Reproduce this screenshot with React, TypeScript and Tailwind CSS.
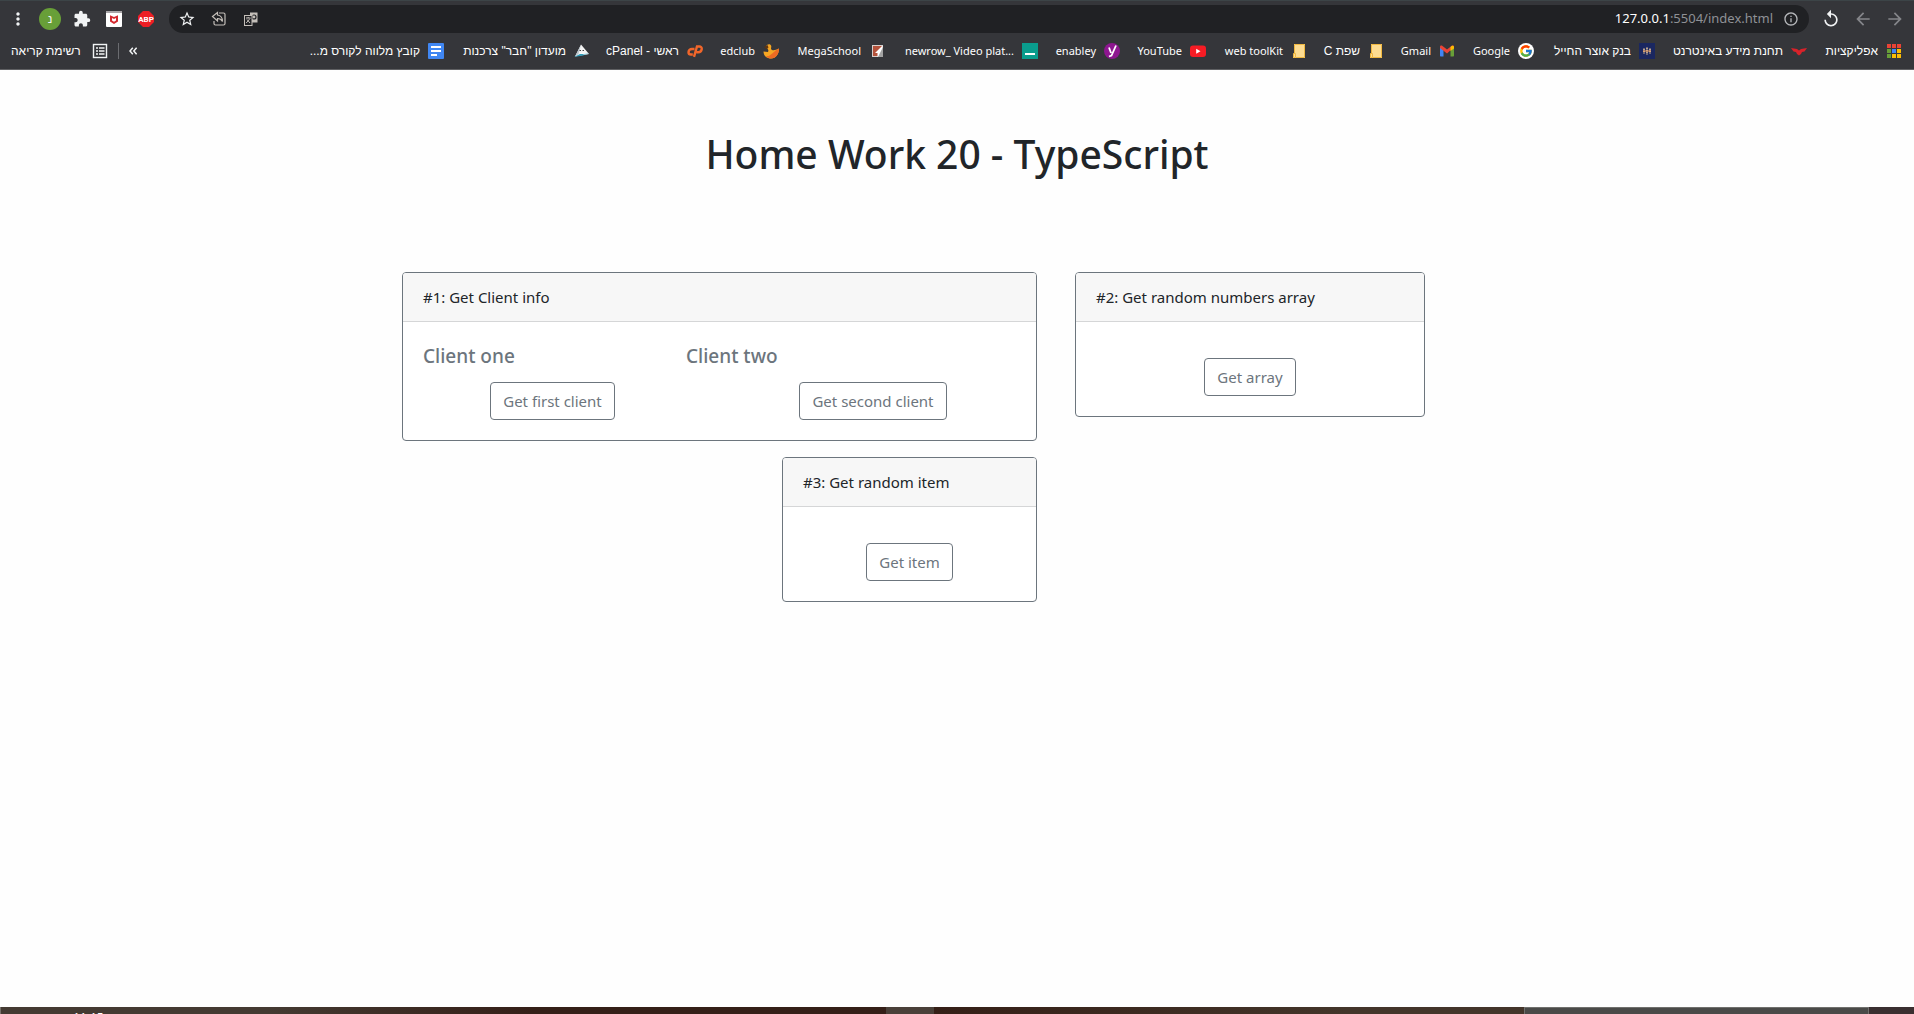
import type { ReactNode } from 'react';
import {
  MdArrowBack,
  MdArrowForward,
  MdExtension,
  MdInfoOutline,
  MdMoreVert,
  MdReplay,
  MdStarBorder,
} from 'react-icons/md';
import { FcGoogle } from 'react-icons/fc';

const AppsIcon = () => {
  const colors = ['#ea4335', '#ea4335', '#ea4335', '#689f38', '#4285f4', '#fbbc04', '#689f38', '#fbbc04', '#fbbc04'];
  return (
    <svg viewBox="0 0 16 16" className="size-4">
      {colors.map((c, i) => (
        <rect key={i} x={1 + (i % 3) * 5} y={1 + Math.floor(i / 3) * 5} width="4" height="4" fill={c} />
      ))}
    </svg>
  );
};

const WingsIcon = () => (
  <svg viewBox="0 0 16 16" className="size-4" fill="#d8222a">
    <path d="M0 5l6 1 2 1.500 2-1.500 6-1-2.500 3.500-2.500.5-1 2-2 1.500-2-1.500-1-2-2.500-.5z" />
  </svg>
);

const BankIcon = () => (
  <svg viewBox="0 0 16 16" className="size-4">
    <rect width="16" height="16" fill="#1a2760" />
    <path d="M5 5.500v5M8 4.500v7M11 5.500v5" stroke="#e3c39a" strokeWidth="1.600" strokeDasharray="1.700 .5" />
    <path d="M4 8h8" stroke="#f5a35c" />
  </svg>
);

const GoogleIcon = () => (
  <span className="flex size-4 items-center justify-center rounded-full bg-white">
    <FcGoogle className="size-3.5" />
  </span>
);

const GmailIcon = () => (
  <svg viewBox="0 0 16 16" className="size-4">
    <path d="M1 4v8.500c0 .6.400 1 1 1h2.500V7z" fill="#4285f4" />
    <path d="M15 4v8.500c0 .6-.4 1-1 1h-2.500V7z" fill="#689f38" />
    <path d="M1 4c0-1.500 1.500-1.800 2.500-1L8 6.500 12.500 3c1-.8 2.500-.5 2.500 1L8 10.500 1 5z" fill="#ea4335" />
    <path d="M11.500 4l1-1c1-.7 2.500-.4 2.500 1v1.500L11.500 8z" fill="#fbbc04" />
  </svg>
);

const FolderIcon = () => (
  <svg viewBox="0 0 16 16" className="size-4">
    <path d="M3 1h11v14H2v-4h1z" fill="#fddc91" />
    <path d="M3.500 11V1.500h10v13" fill="none" stroke="#f0b840" />
    <path d="M2.500 10.500h2v4h-2zM5 14.500h8.500" fill="#fddc91" stroke="#f0b840" />
  </svg>
);

const YouTubeIcon = () => (
  <svg viewBox="0 0 16 16" className="size-4">
    <rect y="2.500" width="16" height="11.500" rx="3" fill="#f61c24" />
    <path d="M6.200 5.700v5L10.500 8.200z" fill="#fff" />
  </svg>
);

const EnableyIcon = () => (
  <svg viewBox="0 0 16 16" className="size-4">
    <circle cx="8" cy="8" r="8" fill="#8e1690" />
    <path d="M5 4.500L7 10M12 2.500L7.500 12.500 5 13.500" fill="none" stroke="#fff" strokeWidth="1.800" />
  </svg>
);

const NewrowIcon = () => (
  <svg viewBox="0 0 16 16" className="size-4">
    <rect width="16" height="16" fill="#0a9c8d" />
    <rect x="3" y="10" width="10" height="2" fill="#fff" />
  </svg>
);

const MegaIcon = () => (
  <svg viewBox="0 0 16 16" className="size-4">
    <rect x="3.500" y="2.500" width="10" height="11" fill="#b5533c" stroke="#d8d0cc" />
    <path d="M13.500 2.500L6 10h2.500v4l5.500-3z" fill="#fff" />
    <path d="M9 14L14 4v10z" fill="#a3a3a3" />
  </svg>
);

const EdclubIcon = () => (
  <svg viewBox="0 0 16 16" className="size-4">
    <path d="M3 3.500C4 1 7 .5 8 2.500c1 1.500-1 3.500 1 4.500 2 .5 4 0 7-1.500 0 5.500-3 10-8 10C4 15.500.5 13 .5 8.500L5 9c1-1.500 0-3-2-5.500z" fill="#f5a623" />
    <path d="M16 5.500c0 5.500-3 10-8 10-2 0-4-1-5-2.500 5 1 7-5 13-7.500z" fill="#ee6b23" />
    <path d="M1 4l3.500-2 1 2.500L3.500 6z" fill="#5b3414" />
  </svg>
);

const CpanelIcon = () => (
  <svg viewBox="0 0 16 16" className="size-4" fill="none" stroke="#f1662a" strokeWidth="2.400">
    <path d="M7.500 6H5C3 6 1.500 7.500 1.500 9.200c0 1.500 1 2.300 2.500 2.300h1.800" />
    <path d="M7 13.800L10 3.500h2.200c1.800 0 2.800 1 2.500 2.800-.3 1.700-1.700 2.900-3.400 2.900H9.500" />
  </svg>
);

const HatIcon = () => (
  <svg viewBox="0 0 16 16" className="size-4">
    <path d="M7 1.500L15 11l-3 .5L1 13.500z" fill="#f3f3f3" />
    <path d="M1 13.500L7 2l-2.500 9z" fill="#b9c4cc" />
    <path d="M0 14l6-3 9-.5-6 2z" fill="#2e9bb8" />
    <path d="M4 9.500L15 11l-5 .5z" fill="#fff" />
    <path d="M5.500 7.500h1.500M8.500 7.500h1.500" stroke="#444" />
  </svg>
);

const DocsIcon = () => (
  <svg viewBox="0 0 16 16" className="size-4">
    <rect width="16" height="16" rx="1" fill="#4087f3" />
    <path d="M3 4h10M3 8h10M3 12h6" stroke="#fff" strokeWidth="2" />
  </svg>
);

const ListIcon = () => (
  <svg viewBox="0 0 16 16" className="size-4" fill="none" stroke="#f1f3f4">
    <rect x="1.500" y="1.500" width="13" height="13" strokeWidth="1.400" />
    <path d="M4 5h2M7 5h5.500M4 8h2M7 8h5.500M4 11h2M7 11h5.500" strokeWidth="1.500" />
  </svg>
);

const McAfeeIcon = () => (
  <svg viewBox="0 0 16 16" className="size-4">
    <rect width="16" height="16" rx="1" fill="#fff" />
    <rect width="16" height="2" fill="#a9a5a8" />
    <path d="M4 4.200l4 1.800 4-1.800v6.300L8 13l-4-2.500z" fill="#d42a30" />
    <path d="M6 7l2 1 2-1v2.500L8 10.700 6 9.500z" fill="#fff" />
  </svg>
);

const ShareIcon = () => (
  <svg viewBox="0 0 16 16" className="size-4" fill="none" stroke="#c4bfb9" strokeWidth="1.200">
    <path d="M8 2h4.500c1 0 1.500.5 1.500 1.500v9c0 1-.5 1.500-1.500 1.500h-8C3.500 14 3 13.500 3 12.500V10" />
    <path d="M1.500 5.500L6.500 1.500v2.500c3.500.5 5 3 5 6.500C10.500 8.500 9 7.500 6.500 7.500v2.500z" />
  </svg>
);

const TranslateIcon = () => (
  <svg viewBox="0 0 16 16" className="size-4">
    <path d="M7 1.500h7.500v10H9l-2-8z" fill="#c4bfb9" />
    <circle cx="11" cy="6" r="2" fill="none" stroke="#202124" strokeWidth="1.200" />
    <rect x="1.500" y="4.500" width="7.500" height="10" fill="#202124" stroke="#c4bfb9" />
    <path d="M3 7h4.500M5.200 6v1M7 7.500L3.200 12M4 8.500L7 12" stroke="#c4bfb9" fill="none" />
  </svg>
);

type Bookmark = { label: string; icon: () => ReactNode; width: string; latin?: boolean };

const bookmarks: Bookmark[] = [
  { label: 'אפליקציות', icon: AppsIcon, width: 'w-[95px]' },
  { label: 'תחנת מידע באינטרנט', icon: WingsIcon, width: 'w-[152px]' },
  { label: 'בנק אוצר החייל', icon: BankIcon, width: 'w-[121px]' },
  { label: 'Google', icon: GoogleIcon, width: 'w-[79px]', latin: true },
  { label: 'Gmail', icon: GmailIcon, width: 'w-[71px]', latin: true },
  { label: 'שפת C', icon: FolderIcon, width: 'w-[77px]' },
  { label: 'web toolKit', icon: FolderIcon, width: 'w-[101px]', latin: true },
  { label: 'YouTube', icon: YouTubeIcon, width: 'w-[86px]', latin: true },
  { label: 'enabley', icon: EnableyIcon, width: 'w-[82px]', latin: true },
  { label: 'newrow_ Video plat...', icon: NewrowIcon, width: 'w-[153px]', latin: true },
  { label: 'MegaSchool', icon: MegaIcon, width: 'w-[106px]', latin: true },
  { label: 'edclub', icon: EdclubIcon, width: 'w-[76px]', latin: true },
  { label: 'ראשי - cPanel', icon: CpanelIcon, width: 'w-[113px]' },
  { label: 'מועדון "חבר" צרכנות', icon: HatIcon, width: 'w-[146px]' },
  { label: 'קובץ מלווה לקורס מ...', icon: DocsIcon, width: 'w-[154px]' },
];

const hebrewText = 'font-["Liberation_Sans",sans-serif] text-xs';
const latinText = 'font-["Noto_Sans",sans-serif] text-[11px]';

function ToolButton({ label, children }: { label: string; children: ReactNode }) {
  return (
    <button type="button" aria-label={label} className="flex w-8 shrink-0 items-center justify-center text-[#f1f3f4]">
      {children}
    </button>
  );
}

function Browser() {
  return (
    <header className="border-t border-b border-t-[#3c4447] border-b-[#5f6063] bg-[#35363a] text-white">
      <div className="flex items-center pt-1 pr-[3px]">
        <div className="flex items-center pl-0.5">
          <ToolButton label="Menu"><MdMoreVert className="size-5" /></ToolButton>
          <ToolButton label="Profile">
            <span className='flex size-[22px] items-center justify-center rounded-full bg-[#689f38] font-["Liberation_Sans",sans-serif] text-xs'>
              נ
            </span>
          </ToolButton>
          <ToolButton label="Extensions"><MdExtension className="size-[18px]" /></ToolButton>
          <ToolButton label="McAfee"><McAfeeIcon /></ToolButton>
          <ToolButton label="Adblock Plus">
            <svg viewBox="0 0 16 16" className="size-4">
              <path d="M5 0h6l5 5v6l-5 5H5l-5-5V5z" fill="#ed1e24" />
              <text x="8" y="11" textAnchor="middle" fontSize="8" fontWeight="700" fill="#fff" fontFamily="Roboto">ABP</text>
            </svg>
          </ToolButton>
        </div>
        <div className="ml-[7px] flex h-7 flex-1 items-center rounded-full bg-[#202124] pr-2.5 pl-0.5">
          <ToolButton label="Bookmark this page"><MdStarBorder className="size-[18px]" /></ToolButton>
          <ToolButton label="Share"><ShareIcon /></ToolButton>
          <ToolButton label="Translate"><TranslateIcon /></ToolButton>
          <a href="#" className='ml-auto font-["Noto_Sans",sans-serif] text-[13px] text-[#8f9196]'>
            <span className="text-white">127.0.0.1</span>:5504/index.html
          </a>
          <MdInfoOutline className="ml-2.5 size-4 text-[#b5b7ba]" />
        </div>
        <div className="ml-1.5 flex">
          <ToolButton label="Reload"><MdReplay className="size-5" /></ToolButton>
          <ToolButton label="Forward"><MdArrowBack className="size-5 text-[#85868a]" /></ToolButton>
          <ToolButton label="Back"><MdArrowForward className="size-5 text-[#85868a]" /></ToolButton>
        </div>
      </div>
      <nav dir="rtl" aria-label="Bookmarks" className="flex h-9 items-center pr-3 pl-[11px]">
        {bookmarks.map(({ label, icon: Icon, width, latin }) => (
          <a key={label} href="#" className={`flex shrink-0 items-center gap-2 whitespace-nowrap ${width}`}>
            <Icon />
            <span className={latin ? latinText : hebrewText} dir={latin ? 'ltr' : 'rtl'}>{label}</span>
          </a>
        ))}
        <button type="button" aria-label="More bookmarks" className="mr-auto">
          <svg viewBox="0 0 8 8" className="size-2" fill="none" stroke="#f1f3f4" strokeWidth="1.500">
            <path d="M3.800.7L1 4l2.800 3.300M7.600.7L4.800 4l2.800 3.300" />
          </svg>
        </button>
        <span className="mr-2.5 h-4 w-px bg-[#6b6c70]" />
        <button type="button" className={`mr-2.5 flex items-center gap-[11px] ${hebrewText}`}>
          <ListIcon />
          רשימת קריאה
        </button>
      </nav>
    </header>
  );
}

function Card({ title, children }: { title: string; children: ReactNode }) {
  return (
    <section className="overflow-hidden rounded border border-[#6c757d] bg-white">
      <h2 className="border-b border-[#d5d6d7] bg-[#f7f7f7] px-5 py-3 text-[15px] leading-6">{title}</h2>
      {children}
    </section>
  );
}

function OutlineButton({ children }: { children: ReactNode }) {
  return (
    <button type="button" className="rounded border border-[#6c757d] px-3 py-1.5 text-[15px] leading-6 text-[#6c757d]">
      {children}
    </button>
  );
}

function ClientTitle({ children }: { children: ReactNode }) {
  return <h3 className="mb-3 text-[19px] leading-7 font-medium text-[#6c757d]">{children}</h3>;
}

function Taskbar() {
  return (
    <footer className="flex h-[7px] overflow-hidden bg-[#351f17] text-xs text-white">
      <div className="flex flex-[886] border-l border-[#77706a] bg-linear-to-r from-[#443a32] from-30% to-[#351f18] to-60%">
        <span className="pt-[3px] pl-[72px] leading-4">11:15</span>
      </div>
      <div className="flex-[48] bg-[#4a4039]" />
      <div className="flex-[591] bg-linear-to-r from-[#351f17] to-[#43352a] to-70%" />
      <div className="flex-[344] border border-b-0 border-[#70706d] bg-[#4a4a48]" />
      <div className="flex-[45] bg-[#3a2f30]" />
    </footer>
  );
}

export default function App() {
  return (
    <div className='flex min-h-screen flex-col bg-[#fefefe] font-["Noto_Sans",sans-serif] text-[#212529]'>
      <Browser />
      <main className="flex-1">
        <h1 className="pt-[60px] text-center text-[39px] leading-[48px] font-medium">Home Work 20 - TypeScript</h1>
        <div className="mx-auto mt-[94px] grid max-w-[1140px] grid-cols-[635px_350px] items-start gap-x-[38px] px-[15px]">
          <div className="flex flex-col gap-4">
            <Card title="#1: Get Client info">
              <div className="grid grid-cols-[263px_1fr] p-5">
                <div>
                  <ClientTitle>Client one</ClientTitle>
                  <div className="flex justify-center pr-1"><OutlineButton>Get first client</OutlineButton></div>
                </div>
                <div>
                  <ClientTitle>Client two</ClientTitle>
                  <div className="flex justify-center pl-11"><OutlineButton>Get second client</OutlineButton></div>
                </div>
              </div>
            </Card>
            <div className="w-[255px] self-end">
              <Card title="#3: Get random item">
                <div className="flex justify-center pt-9 pb-5"><OutlineButton>Get item</OutlineButton></div>
              </Card>
            </div>
          </div>
          <Card title="#2: Get random numbers array">
            <div className="flex justify-center pt-9 pb-5"><OutlineButton>Get array</OutlineButton></div>
          </Card>
        </div>
      </main>
      <Taskbar />
    </div>
  );
}
